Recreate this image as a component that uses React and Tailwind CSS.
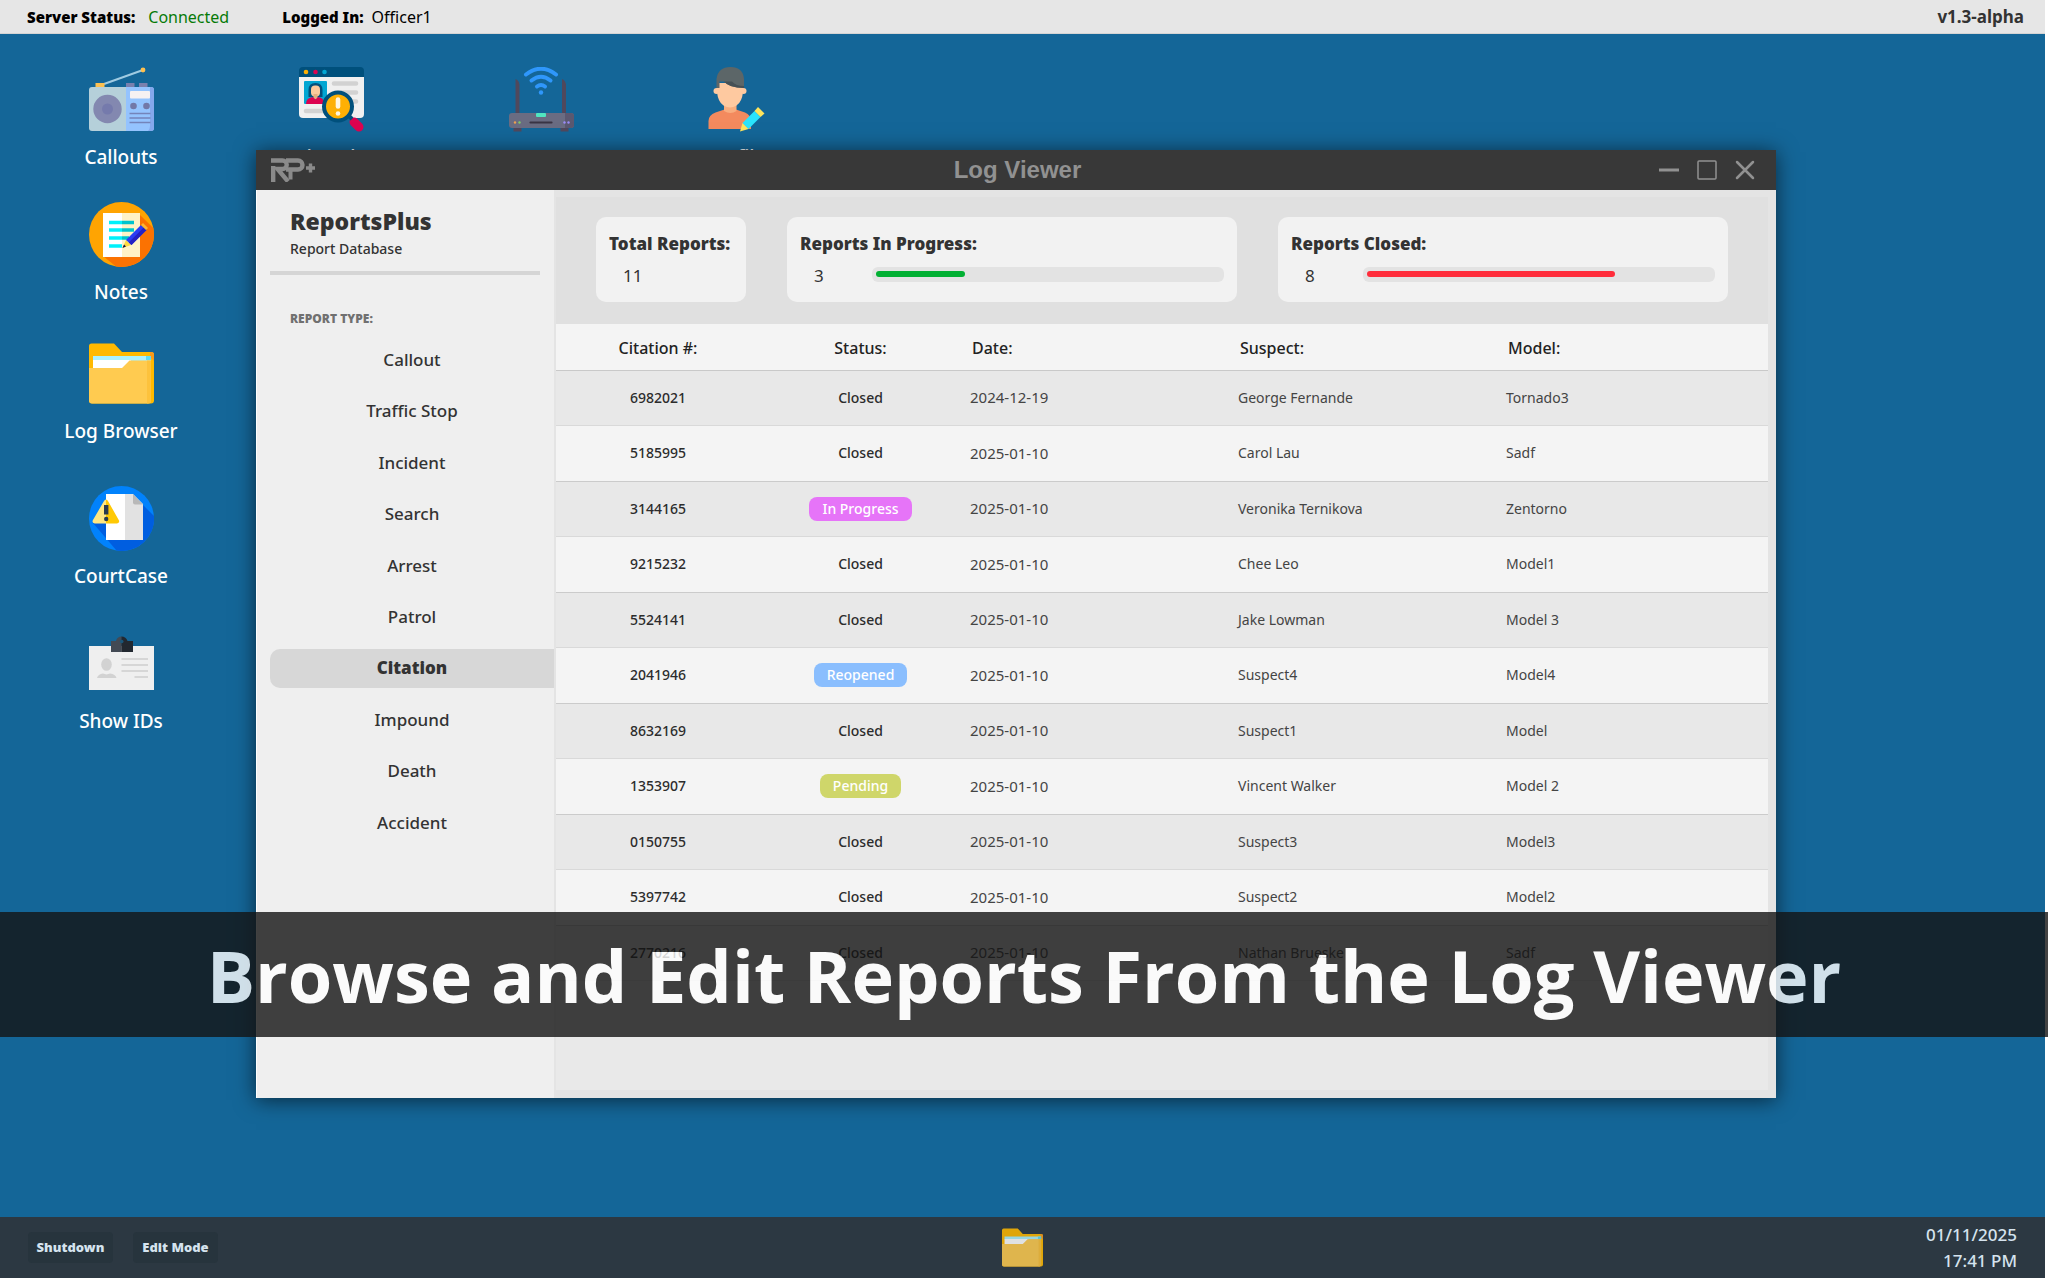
const COLUMNS = ["Citation #:", "Status:", "Date:", "Suspect:", "Model:"];

const REPORTS = [
  ["6982021", "Closed", "2024-12-19", "George Fernande", "Tornado3"],
  ["5185995", "Closed", "2025-01-10", "Carol Lau", "Sadf"],
  ["3144165", "In Progress", "2025-01-10", "Veronika Ternikova", "Zentorno"],
  ["9215232", "Closed", "2025-01-10", "Chee Leo", "Model1"],
  ["5524141", "Closed", "2025-01-10", "Jake Lowman", "Model 3"],
  ["2041946", "Reopened", "2025-01-10", "Suspect4", "Model4"],
  ["8632169", "Closed", "2025-01-10", "Suspect1", "Model"],
  ["1353907", "Pending", "2025-01-10", "Vincent Walker", "Model 2"],
  ["0150755", "Closed", "2025-01-10", "Suspect3", "Model3"],
  ["5397742", "Closed", "2025-01-10", "Suspect2", "Model2"],
  ["2770216", "Closed", "2025-01-10", "Nathan Brueske", "Sadf"],
];

const TYPES = [
  "Callout",
  "Traffic Stop",
  "Incident",
  "Search",
  "Arrest",
  "Patrol",
  "Citation",
  "Impound",
  "Death",
  "Accident",
];

const STATUS_STYLE = {
  "In Progress": "bg-[#e674f8] text-white",
  Reopened: "bg-[#8abefe] text-white",
  Pending: "bg-[#cfd66a] text-white",
};

const COLUMN_STYLE = [
  "w-[204px] pt-0.5 text-center font-medium",
  "w-[201px] pt-0.5 text-center font-medium",
  "w-[268px] pt-0.5 pl-[11px] text-left font-medium",
  "w-[268px] pt-0.5 pl-[11px] text-left font-medium",
  "pt-0.5 pl-[11px] text-left font-medium",
];

function RadioIcon() {
  return (
    <svg viewBox="0 0 65 65" className="size-[65px]" aria-hidden="true">
      <path d="M15 17 54 3" stroke="#9fcbe2" strokeWidth="2" />
      <circle cx="54" cy="3" r="2.4" fill="#fdc050" />
      <rect x="6.500" y="16" width="9" height="5" fill="#fdc050" />
      <rect x="37" y="16" width="8.500" height="5" fill="#7a80ae" />
      <rect x="50" y="16" width="8.500" height="5" fill="#7a80ae" />
      <path d="M3 20h34v44H3a3 3 0 0 1-3-3V23a3 3 0 0 1 3-3z" fill="#b5d0da" />
      <path d="M37 20h25a3 3 0 0 1 3 3v38a3 3 0 0 1-3 3H37z" fill="#94c3fe" />
      <path d="M61 20h1a3 3 0 0 1 3 3v38a3 3 0 0 1-3 3h-3q2-2 2-5z" fill="#84a8ec" />
      <circle cx="18.500" cy="42" r="14.200" fill="#8388b0" />
      <circle cx="18.500" cy="42" r="5.500" fill="#757aac" />
      <rect x="41" y="24" width="20" height="7.500" rx="1" fill="#f7f1f2" />
      <circle cx="44.500" cy="39" r="3.300" fill="#7278a8" />
      <circle cx="57.500" cy="39" r="3.300" fill="#7278a8" />
      <path d="M40.500 46.500h21M40.500 51h21M40.500 55.500h21" stroke="#7484ba" strokeWidth="1.600" />
    </svg>
  );
}

function NotesIcon() {
  return (
    <svg viewBox="0 0 65 65" className="size-[65px]" aria-hidden="true">
      <circle cx="32.500" cy="32.500" r="32.500" fill="#ffa402" />
      <path d="M51 13 64.300 26A32.500 32.500 0 0 1 27 64.500L14 54z" fill="#fb7202" />
      <path d="M14 11h19v44H14z" fill="#fff" />
      <path d="M33 11h18v44H33z" fill="#fff2c6" />
      <path d="M20 20.500h13M20 28h13M20 36h13M20 44h13" stroke="#00f1fb" strokeWidth="3.600" />
      <path d="M33 20.500h12M33 28h12M33 36h7" stroke="#00c3cd" strokeWidth="3.600" />
      <path d="M33.500 46 37 38l5 5z" fill="#fedb41" />
      <path d="M33.500 46 35 42.500l2 2z" fill="#121149" />
      <path d="m37 38 15-15 5.500 5-15 15z" fill="#2b3cf3" />
      <path d="m39.700 40.500 15-15 2.800 2.500-15 15z" fill="#2420c4" />
      <path d="m52 23 2-2 5 5-2 2z" fill="#fdb62f" />
    </svg>
  );
}

function FolderIcon({ className }) {
  return (
    <svg viewBox="0 0 65 65" className={className} aria-hidden="true">
      <path d="M2.500 2.500H25l8 8.500h29.500A2.500 2.500 0 0 1 65 13.500v46a3 3 0 0 1-3 3H3a3 3 0 0 1-3-3V5a2.500 2.500 0 0 1 2.500-2.500z" fill="#ffb900" />
      <path d="M61 11h1.500A2.500 2.500 0 0 1 65 13.500V20l-4-4z" fill="#f79a1a" />
      <path d="M4 15h58v5H4z" fill="#aaf1fd" />
      <path d="M57 15h5v4h-5z" fill="#60dcf2" />
      <path d="M4 19h38v9H4z" fill="#fff" />
      <path d="M0 27h33l7.500-7.500H62V60q0 2.500-3 2.500H3a3 3 0 0 1-3-3z" fill="#ffcb50" />
      <path d="M58 19.500h4V60q0 2.500-3 2.500h-1z" fill="#fdc23c" />
    </svg>
  );
}

function CourtIcon() {
  return (
    <svg viewBox="0 0 65 65" className="size-[65px]" aria-hidden="true">
      <circle cx="32.500" cy="32.500" r="32.500" fill="#0182fc" />
      <path d="M54 19 65 30A32.500 32.500 0 0 1 27.500 64.600L4 37z" fill="#005ee0" />
      <path d="M17 8h19v46H17z" fill="#fff" />
      <path d="M36 8h8l10 10v36H36z" fill="#e2e2e2" />
      <path d="m44 8 10 10.500H46a2 2 0 0 1-2-2z" fill="#b8b8b8" />
      <path d="M17 13.500q1.300 0 2 1.500L30 34.500q.8 2.500-2 3H17z" fill="#ffc905" />
      <path d="M17 13.500q-1.300 0-2 1.500L3.700 34.500q-.8 2.500 2 3H17z" fill="#ffe782" />
      <path d="M15 19h4.400v9.500H15z" fill="#2b3b4e" />
      <circle cx="17.200" cy="33" r="2.200" fill="#2b3b4e" />
    </svg>
  );
}

function IdIcon() {
  return (
    <svg viewBox="0 0 65 65" className="size-[65px]" aria-hidden="true">
      <path d="M0 15h65v44H0z" fill="#efefef" />
      <ellipse cx="17.500" cy="33.500" rx="5.300" ry="6.300" fill="#d2d2d2" />
      <path d="M8 47q1-4 6-4.600l3.500 1 3.500-1q5.500.6 6.500 4.600z" fill="#d2d2d2" />
      <path d="M32.500 28H59M32.500 34H59M32.500 40H59M45.500 46H59" stroke="#d6d6d6" strokeWidth="2" />
      <path d="M22 10h5q1-4.500 5.700-4.500V21H22z" fill="#434a54" />
      <path d="M32.500 5.500Q37 5.500 38.500 10H44v11H32.500z" fill="#222830" />
      <circle cx="32.700" cy="10.500" r="1.800" fill="#1a567a" />
    </svg>
  );
}

function LookupIcon() {
  return (
    <svg viewBox="0 0 65 65" className="size-[65px]" aria-hidden="true">
      <path d="M0 9h65v38a4 4 0 0 1-4 4H4a4 4 0 0 1-4-4z" fill="#f0f0f0" />
      <path d="M4 0h57a4 4 0 0 1 4 4v6H0V4a4 4 0 0 1 4-4z" fill="#00507c" />
      <circle cx="7" cy="5" r="2.300" fill="#feb004" />
      <circle cx="16.500" cy="5" r="2.300" fill="#dc0350" />
      <circle cx="25.500" cy="5" r="2.300" fill="#02a6d2" />
      <rect x="5" y="14" width="23" height="23" rx="1" fill="#02a6d2" />
      <path d="M9.500 30V23q0-7 7-7t7 7v7z" fill="#02507c" />
      <rect x="12" y="18.500" width="9" height="11" rx="4" fill="#fbc99b" />
      <path d="M14.500 27h4v5h-4z" fill="#e6ad7c" />
      <path d="M7 37q0-6.500 7-7l2.500 2.500L19 30q6 .5 6.500 7z" fill="#dc0350" />
      <path d="M35 16.500h22M43 25.500h14M52 34.500h5M7 44h17" stroke="#d2d2d2" strokeWidth="4.600" strokeLinecap="round" />
      <path d="m55 55 5 5" stroke="#dc0350" strokeWidth="9" strokeLinecap="round" />
      <path d="m49 48 4 4" stroke="#00507c" strokeWidth="4" />
      <circle cx="39" cy="39.500" r="14" fill="#feb004" stroke="#00507c" strokeWidth="4" />
      <path d="M39 32.500v7" stroke="#fff6e0" strokeWidth="4.600" strokeLinecap="round" />
      <circle cx="39" cy="46.500" r="2.300" fill="#fff6e0" />
    </svg>
  );
}

function RouterIcon() {
  return (
    <svg viewBox="0 0 65 65" className="size-[65px]" aria-hidden="true">
      <g fill="none" stroke="#2f97fb" strokeWidth="4" strokeLinecap="round">
        <path d="M17 7.500q15-11.500 30 0" />
        <path d="M22.500 13.500q9.500-7.500 19 0" />
        <path d="M28 19.500q4-3 8 0" />
      </g>
      <circle cx="32" cy="25.500" r="2.200" fill="#2f97fb" />
      <path d="M6.500 12q4 1.500 4 7v28h-4z" fill="#50485c" />
      <path d="M53 12q4 1.500 4 7v28h-4z" fill="#50485c" />
      <path d="M4.500 60h8v4.500h-8zM51.500 60h8v4.500h-8z" fill="#50485c" />
      <rect x="0" y="46" width="65" height="15" rx="3" fill="#6a6c82" />
      <path d="M56 46h6a3 3 0 0 1 3 3v9a3 3 0 0 1-3 3h-6z" fill="#5b5870" />
      <rect x="27" y="46" width="10" height="4" rx="1" fill="#51e6c0" />
      <path d="M21.500 55.500h21" stroke="#3a3545" strokeWidth="2.200" strokeLinecap="round" />
      <circle cx="6" cy="55.500" r="1.200" fill="#f0a050" />
      <circle cx="10.500" cy="55.500" r="1.200" fill="#7ecb6a" />
      <circle cx="55.500" cy="55.500" r="1.200" fill="#9a8cf6" />
      <circle cx="59.500" cy="55.500" r="1.200" fill="#9a8cf6" />
    </svg>
  );
}

function ProfileIcon() {
  return (
    <svg viewBox="0 0 65 65" className="size-[65px]" aria-hidden="true">
      <path d="M4.500 62V54q0-6 7-8.500l9-3h11.500l9 3q6 2.500 6 8.500v8z" fill="#f38a5e" />
      <path d="M20 37h12.500v7q-6 4-12.500 0z" fill="#f8ad7e" />
      <circle cx="12.500" cy="24" r="3" fill="#fec9a0" />
      <circle cx="39.500" cy="24" r="3" fill="#fec9a0" />
      <path d="M13 16h26v9q-1 10-6.500 13.500-6.500 4-13 0Q14 35 13 25z" fill="#fec9a0" />
      <path d="M12.500 21V12Q14 0 26.500 0T40 12v9q-15-.5-20-6.500h-4.500V21z" fill="#5c6668" />
      <path d="M20 14.500h8q4 4.500 12 4.500v2q-15 0-20-6.500z" fill="#465055" />
      <path d="m36 64.500 2.500-8.500 6 6z" fill="#fee45c" />
      <path d="m38.500 56 12-12 6 6-12 12z" fill="#2ae4fd" />
      <path d="m50.500 44 3.500-4 6.500 6.500-4 3.500z" fill="#fee45c" />
    </svg>
  );
}

const SHORTCUTS = [
  { label: "Callouts", icon: <RadioIcon />, place: "left-[61px] top-[33px]" },
  { label: "Notes", icon: <NotesIcon />, place: "left-[61px] top-[168px]" },
  {
    label: "Log Browser",
    icon: <FolderIcon className="size-[65px]" />,
    place: "left-[61px] top-[307px]",
  },
  { label: "CourtCase", icon: <CourtIcon />, place: "left-[61px] top-[452px]" },
  { label: "Show IDs", icon: <IdIcon />, place: "left-[61px] top-[597px]" },
  { label: "Ped Lookup", icon: <LookupIcon />, place: "left-[271px] top-[33px]" },
  { label: "Server", icon: <RouterIcon />, place: "left-[481px] top-[33px]" },
  { label: "Profile", icon: <ProfileIcon />, place: "left-[676px] top-[33px]" },
];

function Logo() {
  return (
    <svg viewBox="0 0 44 24" className="h-6 w-11" fill="none" stroke="#8a8a8a" role="img" aria-label="RP+">
      <path d="M0 2.500h11.500a4 4 0 0 1 0 8.500H6.500L17 23.500" strokeWidth="4.400" />
      <path d="M2.200 8v16" strokeWidth="4.400" />
      <path d="M15 2.500h12a4 4 0 0 1 0 9H15" strokeWidth="4.400" />
      <path d="M19.500 13v8.500" strokeWidth="4" />
      <path d="M35 10h9M39.500 5.500v9" strokeWidth="3.400" />
    </svg>
  );
}

function TitleBar() {
  return (
    <div className="grid h-10 shrink-0 grid-cols-[1fr_auto_1fr] items-center bg-[#383838] pr-5 pl-[15px]">
      <Logo />
      <h1 className="pl-2 font-['Liberation_Sans',sans-serif] text-2xl font-bold text-[#919191]">Log Viewer</h1>
      <div className="flex items-center justify-end gap-4 text-[#919191]">
        <button type="button" aria-label="Minimize">
          <svg viewBox="0 0 22 22" className="size-[22px]" stroke="currentColor" fill="none">
            <path d="M1 11h20" strokeWidth="3" />
          </svg>
        </button>
        <button type="button" aria-label="Maximize">
          <svg viewBox="0 0 22 22" className="size-[22px]" stroke="currentColor" fill="none">
            <rect x="2" y="2" width="18" height="18" rx="1" strokeWidth="1.500" />
          </svg>
        </button>
        <button type="button" aria-label="Close">
          <svg viewBox="0 0 22 22" className="size-[22px]" stroke="currentColor" fill="none">
            <path d="m3 3 16 16M19 3 3 19" strokeWidth="2.500" strokeLinecap="round" />
          </svg>
        </button>
      </div>
    </div>
  );
}

function Sidebar() {
  return (
    <aside className="flex w-[298px] shrink-0 flex-col border-l border-white bg-[#efefef] pl-[13px] text-[#333]">
      <h2 className="mt-[13px] pl-5 text-[23px] leading-9 font-black">ReportsPlus</h2>
      <p className="pl-5 text-sm leading-5 font-medium">Report Database</p>
      <hr className="mt-3 mr-[14px] border-t-4 border-[#d5d5d5]" />
      <p className="mt-9 pl-5 text-xs leading-4 font-black text-[#707070]">REPORT TYPE:</p>
      <nav className="mt-[7px] grid h-[514px] auto-rows-fr items-center">
        {TYPES.map((type) => (
          <button
            key={type}
            type="button"
            className={
              type === "Citation"
                ? "h-[39px] rounded-l-[10px] bg-[#d7d7d7] text-[17px] font-black"
                : "h-[39px] text-[17px] font-medium"
            }
          >
            {type}
          </button>
        ))}
      </nav>
    </aside>
  );
}

function ProgressCard({ title, value, total, percent, color }) {
  return (
    <div className="h-[85px] flex-1 rounded-[10px] bg-[#f2f2f2] px-[13px] pt-[13px]">
      <h3 className="text-[17px] leading-7 font-black">{title}</h3>
      <div className="flex h-9 items-start">
        <span className="w-[72px] pl-[14px] text-[17px] leading-9">{value}</span>
        <div
          className="mt-[9px] h-[15px] flex-1 rounded-md bg-[#e3e3e3] p-1"
          role="progressbar"
          aria-label={title}
          aria-valuenow={value}
          aria-valuemax={total}
        >
          <div
            className={color === "green" ? "h-1.5 rounded-full bg-[#02b033]" : "h-1.5 rounded-full bg-[#ff2d3b]"}
            style={{ width: `${percent}%` }}
          />
        </div>
      </div>
    </div>
  );
}

function Stats() {
  return (
    <section className="flex gap-[41px] bg-[#e0e0e0] px-10 pt-5 pb-[22px] text-[#333]">
      <div className="h-[85px] w-[150px] rounded-[10px] bg-[#f2f2f2] px-[13px] pt-[13px]">
        <h3 className="text-[17px] leading-7 font-black whitespace-nowrap">Total Reports:</h3>
        <p className="pl-[14px] text-[17px] leading-9">11</p>
      </div>
      <ProgressCard title="Reports In Progress:" value={3} total={11} percent={26} color="green" />
      <ProgressCard title="Reports Closed:" value={8} total={11} percent={72} color="red" />
    </section>
  );
}

function ReportTable() {
  return (
    <table className="h-[657px] w-full table-fixed border-collapse">
      <thead>
        <tr className="h-[46px] border-b border-[#c9c9c9] bg-[#f4f4f4] text-base text-[#222]">
          {COLUMNS.map((name, i) => (
            <th key={name} scope="col" className={COLUMN_STYLE[i]}>
              {name}
            </th>
          ))}
        </tr>
      </thead>
      <tbody>
        {REPORTS.map(([id, status, date, suspect, model], i) => (
          <tr
            key={id}
            className={
              i % 2 === 0
                ? "h-[55px] border-b border-[#d9d9d9] bg-[#e8e8e8] text-sm text-[#444]"
                : "h-[55px] border-b border-[#cbcbcb] bg-[#f4f4f4] text-sm text-[#444]"
            }
          >
            <td className="text-center font-medium text-[#2c2c2c]">{id}</td>
            <td className="text-center font-medium text-[#2c2c2c]">
              {STATUS_STYLE[status] ? (
                <span className={`inline-block rounded-lg px-[13px] leading-6 ${STATUS_STYLE[status]}`}>{status}</span>
              ) : (
                status
              )}
            </td>
            <td className="pl-[9px] text-[15px]">{date}</td>
            <td className="pl-[9px]">{suspect}</td>
            <td className="pl-[9px]">{model}</td>
          </tr>
        ))}
      </tbody>
    </table>
  );
}

export default function App() {
  return (
    <div className="relative min-h-screen overflow-hidden bg-white pr-[3px] font-['Noto_Sans',sans-serif]">
      <div className="flex min-h-screen flex-col">
        <header className="flex h-[34px] items-center border-b border-[#d4d4d4] bg-[#e6e6e6] pt-px pr-[21px] pl-[27px] text-base text-black">
          <span className="text-[15px] font-black">Server Status:</span>
          <span className="ml-[13px] text-[#067a06]">Connected</span>
          <span className="ml-[53px] text-[15px] font-black">Logged In:</span>
          <span className="ml-2">Officer1</span>
          <span className="ml-auto text-[17px] font-bold text-[#333]">v1.3-alpha</span>
        </header>

        <main className="relative flex-1 bg-[#146698]">
          {SHORTCUTS.map(({ label, icon, place }) => (
            <button
              key={label}
              type="button"
              className={`absolute flex w-[120px] flex-col items-center gap-[11px] text-[19px] leading-7 font-medium text-white ${place}`}
            >
              {icon}
              {label}
            </button>
          ))}

          <section className="absolute top-[116px] right-[269px] bottom-[119px] left-[256px] flex flex-col bg-[#e4e4e4] shadow-[0_2px_20px_rgba(0,0,0,0.6)]">
            <TitleBar />
            <div className="flex min-h-0 flex-1">
              <Sidebar />
              <div className="flex flex-1 flex-col pt-[7px] pr-2 pb-2 pl-0.5">
                <Stats />
                <div className="flex-1 bg-[#e9e9e9]">
                  <ReportTable />
                </div>
              </div>
            </div>
          </section>
        </main>

        <footer className="grid h-[61px] grid-cols-[1fr_auto_1fr] items-center bg-[#2c3842] px-7 text-[#d5e3ee]">
          <div className="flex gap-5">
            <button type="button" className="h-[31px] w-[85px] rounded bg-[#27343d] text-[13px] font-black">
              Shutdown
            </button>
            <button type="button" className="h-[31px] w-[85px] rounded bg-[#27343d] text-[13px] font-black">
              Edit Mode
            </button>
          </div>
          <button type="button" aria-label="Log Browser" className="opacity-85">
            <FolderIcon className="size-[41px]" />
          </button>
          <div className="text-right text-[17px] leading-[26px] font-medium">
            <p>01/11/2025</p>
            <p>17:41 PM</p>
          </div>
        </footer>
      </div>

      <div className="absolute inset-x-0 top-[912px] flex h-[125px] items-center justify-center bg-[#141414] opacity-80">
        <p className="font-['Open_Sans',sans-serif] text-[72px] leading-none font-bold whitespace-nowrap text-white">
          Browse and Edit Reports From the Log Viewer
        </p>
      </div>
    </div>
  );
}
